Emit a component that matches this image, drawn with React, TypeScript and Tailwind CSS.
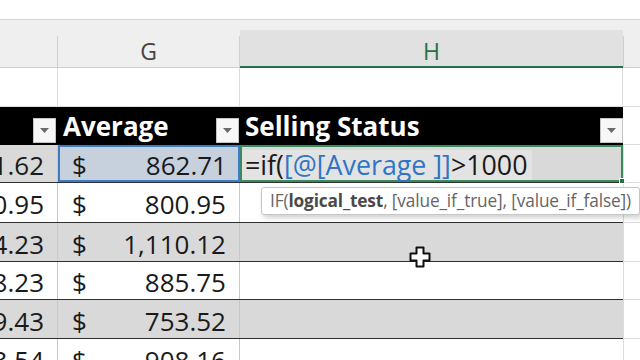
import React from 'react';

const font = { fontFamily: '"Open Sans", "Noto Sans", sans-serif' };

type Row = { f: string; g: string; banded: boolean; h: number };

const rows: Row[] = [
  { f: '1.62', g: '862.71', banded: true, h: 38 },
  { f: '0.95', g: '800.95', banded: false, h: 40 },
  { f: '4.23', g: '1,110.12', banded: true, h: 39 },
  { f: '8.23', g: '885.75', banded: false, h: 38 },
  { f: '9.43', g: '753.52', banded: true, h: 39 },
  { f: '3.54', g: '908.16', banded: false, h: 39 },
];

function FilterButton() {
  return (
    <div className="flex h-[25px] w-[23px] shrink-0 items-center justify-center border border-[#c4c4c4] bg-[#f7f7f7]">
      <svg width="9" height="5" viewBox="0 0 9 5">
        <path d="M0 0 H9 L4.5 5 Z" fill="#6a6a6a" />
      </svg>
    </div>
  );
}

function CrossCursor() {
  return (
    <svg width="22" height="22" viewBox="0 0 22 22" className="absolute left-[409px] top-[246px]">
      <path
        d="M7.5 1.5 H14.5 V7.5 H20.5 V14.5 H14.5 V20.5 H7.5 V14.5 H1.5 V7.5 H7.5 Z"
        fill="#ffffff"
        stroke="#111111"
        strokeWidth="2"
        strokeLinejoin="round"
      />
    </svg>
  );
}

export default function App() {
  return (
    <div className="relative h-[360px] w-[640px] overflow-hidden bg-white text-[#1a1a1a]" style={font}>
      {/* strip above the column headers */}
      <div className="h-[19px] bg-white" />
      <div className="h-[11px] border-t border-[#d6d6d6] bg-[#efefef]" />

      {/* column headers */}
      <div className="flex h-[38px] bg-[#efefef] text-[23px] leading-none text-[#444]">
        <div className="mt-[6px] w-[58px] border-b border-r border-[#cfcfcf]" />
        <div className="mt-[6px] flex w-[182px] items-center justify-center border-b border-r border-[#cfcfcf]">G</div>
        <div className="flex w-[383px] items-center justify-center border-b-2 border-[#217346] bg-[#e1e1e1] pt-[6px] text-[#217346]">
          H
        </div>
        <div className="mt-[6px] flex-1 border-b border-l border-[#cfcfcf]" />
      </div>

      {/* empty row */}
      <div className="flex h-[39px]">
        <div className="w-[58px] border-b border-r border-[#dcdcdc]" />
        <div className="w-[182px] border-b border-r border-[#dcdcdc]" />
        <div className="w-[383px] border-b border-r border-[#dcdcdc]" />
        <div className="flex-1 border-b border-[#dcdcdc]" />
      </div>

      {/* table header */}
      <div className="flex h-[38px]">
        <div className="flex w-[623px] bg-black text-[26px] font-bold leading-none text-white">
          <div className="flex w-[58px] items-end justify-end pb-[2px] pr-[2px]">
            <FilterButton />
          </div>
          <div className="flex w-[182px] items-end justify-between pb-[2px] pl-[5px] pr-[1px]">
            <span className="pb-[4px]">Average</span>
            <FilterButton />
          </div>
          <div className="flex w-[383px] items-end justify-between pb-[2px] pl-[5px]">
            <span className="pb-[4px]">Selling Status</span>
            <FilterButton />
          </div>
        </div>
        <div className="flex-1 border-b border-[#dcdcdc]" />
      </div>

      {/* data rows */}
      {rows.map((r, i) => {
        const bg = r.banded ? 'bg-[#d9d9d9]' : 'bg-white';
        const first = i === 0;
        return (
          <div key={i} className="flex" style={{ height: r.h }}>
            <div className={`flex w-[623px] border-b border-[#2e2e2e] text-[26px] leading-none ${bg}`}>
              <div className="flex w-[58px] items-center justify-end border-r border-[#c8c8c8] pr-[13px] pt-[3px]">
                <span className="whitespace-nowrap">{r.f}</span>
              </div>
              {first ? (
                <div className="flex w-[182px] items-center justify-between border-2 border-[#3c7cc6] bg-[#c7d1de] pl-[12px] pr-[11px] pt-[3px]">
                  <span>$</span>
                  <span>{r.g}</span>
                </div>
              ) : (
                <div className="flex w-[182px] items-center justify-between border-r border-[#c8c8c8] pl-[14px] pr-[13px] pt-[3px]">
                  <span>$</span>
                  <span>{r.g}</span>
                </div>
              )}
              {first ? (
                <div className="relative flex w-[383px] items-center border-2 border-[#3b8a5c] bg-[#d9d9d9] pt-[3px] text-[26.8px]">
                  <span className="flex h-full items-center bg-[#e3e3e3] pl-[3px] pr-[4px]">
                    =if(<span className="text-[#2e75c7]">[@[Average ]]</span>&gt;1000
                  </span>
                  <div className="absolute -bottom-[4px] -right-[4px] h-[6px] w-[6px] border border-white bg-[#217346]" />
                </div>
              ) : (
                <div className="w-[383px]" />
              )}
            </div>
            <div className="flex-1 border-b border-l border-[#dcdcdc]" />
          </div>
        );
      })}

      {/* function tooltip */}
      <div className="absolute left-[261px] top-[187px] flex h-[28px] items-center whitespace-nowrap rounded-[3px] border border-[#c6c6c6] bg-white pl-[8px] pr-[8px] text-[17.3px] tracking-[-0.15px] text-[#666] shadow-[2px_3px_5px_rgba(0,0,0,0.18)]">
        IF(<span className="font-bold text-[#4a4a4a]">logical_test</span>, [value_if_true], [value_if_false])
      </div>

      <CrossCursor />
    </div>
  );
}
